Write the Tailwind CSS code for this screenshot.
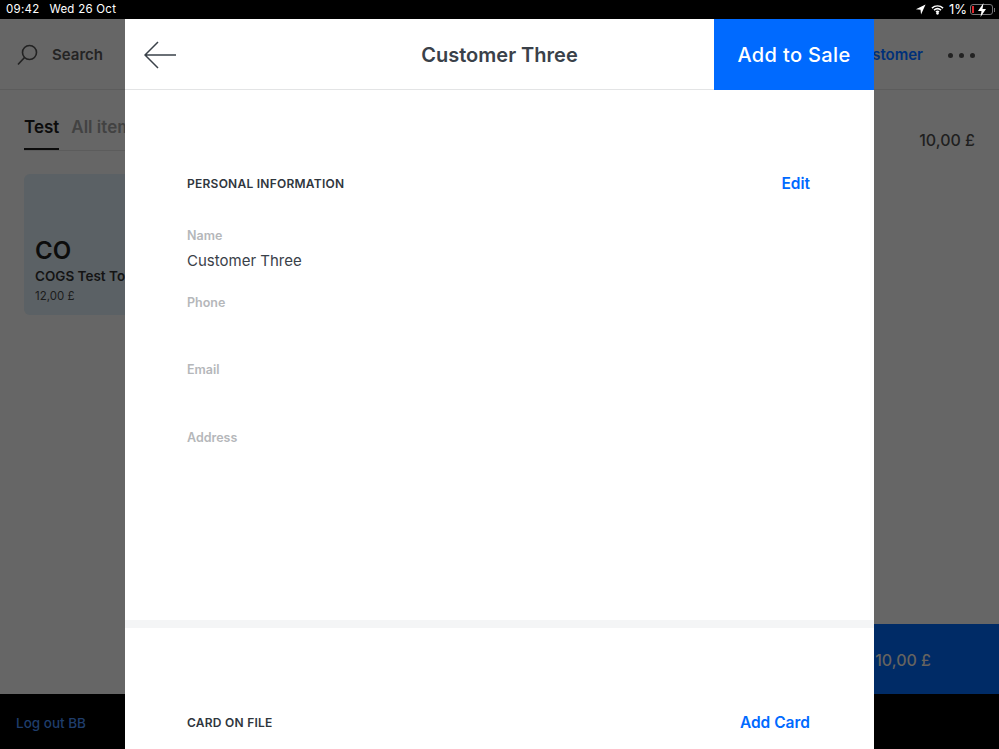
<!DOCTYPE html>
<html lang="en">
<head>
  <meta charset="UTF-8" />
  <title>Customer Three</title>
  <script src="https://cdn.jsdelivr.net/npm/@tailwindcss/browser@4"></script>
</head>
<body class="bg-[#666666] font-['Inter',sans-serif] overflow-hidden">
  <div class="relative w-[999px] h-[749px] flex flex-col overflow-hidden">
    <!-- Status bar -->
    <div class="h-[19px] bg-black text-white flex items-center justify-between pl-[6px] pr-[4px] shrink-0">
      <div class="flex gap-[10px] text-[11.5px] tracking-[0.25px]"><span>09:42</span><span>Wed 26 Oct</span></div>
      <div class="flex items-center text-[13px]">
        <svg class="w-[11px] h-[11px] mr-[5px]" viewBox="0 0 12 12"><path d="M11.5 .5 L1 5.6 L6 6.2 L6.6 11.5 Z" fill="#fff"/></svg>
        <svg class="w-[13px] h-[11px] mr-[5px]" viewBox="0 0 14 11" fill="none" stroke="#fff" stroke-width="1.6"><path d="M1 4 C4.5 .8 9.5 .8 13 4"/><path d="M3.2 6.2 C5.4 4.3 8.6 4.3 10.8 6.2"/><path d="M5.3 8.2 C6.3 7.4 7.7 7.4 8.7 8.2"/><circle cx="7" cy="9.6" r=".7" fill="#fff"/></svg>
        <span class="mr-[3px]">1%</span>
        <div class="relative w-[23px] h-[11px] border border-[#77777a] rounded-[3px]">
          <div class="absolute left-[1px] top-[1px] w-[2px] h-[7px] bg-[#e0262b]"></div>
          <svg class="absolute left-[6px] -top-[2px] w-[10px] h-[14px]" viewBox="0 0 10 14"><path d="M6.5 0 L1 8 H4.5 L3.5 14 L9 6 H5.5 Z" fill="#fff"/></svg>
        </div>
        <div class="w-[1px] h-[4px] bg-[#77777a] ml-[1px]"></div>
      </div>
    </div>

    <!-- Page behind the modal -->
    <div class="h-[71px] border-b border-[#5c5c5c] flex items-center justify-between pt-[2px] pl-[17px] pr-[24px] shrink-0">
      <div class="flex items-center gap-[14px]">
        <svg class="w-[21px] h-[22px]" viewBox="0 0 21 22" fill="none" stroke="#222" stroke-width="1.6"><circle cx="12.5" cy="8.5" r="7"/><path d="M7.5 13.5 L1 20.5"/></svg>
        <span class="text-[15px] font-semibold text-[#242424]">Search</span>
      </div>
      <div class="flex items-center gap-[25px]">
        <span class="text-[15px] font-semibold text-[#003079]">Customer</span>
        <div class="flex gap-[6px]">
          <div class="w-[5px] h-[5px] rounded-full bg-[#222]"></div>
          <div class="w-[5px] h-[5px] rounded-full bg-[#222]"></div>
          <div class="w-[5px] h-[5px] rounded-full bg-[#222]"></div>
        </div>
      </div>
    </div>

    <div class="flex-1 flex justify-between pl-[24px] pr-[24px]">
      <div class="w-[300px]">
        <div class="flex gap-[12px] text-[17px] leading-[24px] font-semibold mt-[25px] border-b border-[#5c5c5c] h-[36px]">
          <span class="text-[#0c0c0c] border-b-2 border-[#0c0c0c] h-[35px]">Test</span>
          <span class="text-[#424242]">All items</span>
        </div>
        <div class="mt-[23px] w-[200px] h-[141px] bg-[#5b6165] rounded-[6px] pl-[11px] pt-[63px]">
          <div class="text-[24px] leading-[28px] font-semibold text-[#0c0c0c]">CO</div>
          <div class="text-[13.5px] leading-[18px] mt-[2px] font-semibold text-[#141414] whitespace-nowrap">COGS Test Tool</div>
          <div class="text-[11.5px] leading-[16px] mt-[3px] text-[#1c1c1c]">12,00 £</div>
        </div>
      </div>
      <div class="text-[16px] font-medium text-[#1f1f1f] mt-[38px]">10,00 £</div>
    </div>

    <div class="h-[70px] flex justify-end shrink-0">
      <div class="w-[300px] bg-[#002b66] flex items-center justify-end pt-[2px] pr-[68px] text-[16px] font-medium text-[#66635f]">10,00 £</div>
    </div>
    <div class="h-[55px] bg-black flex items-center pt-[3px] pl-[16px] shrink-0 text-[13.5px] font-medium text-[#1f3d6b]">Log out BB</div>

    <!-- Modal -->
    <div class="absolute left-[125px] top-[19px] w-[749px] h-[730px] bg-white flex flex-col">
      <div class="h-[71px] border-b border-[#e3e4e5] flex items-center justify-between relative shrink-0">
        <svg class="w-[32px] h-[28px] ml-[19px] mt-[2px]" viewBox="0 0 32 28" fill="none" stroke="#3a4149" stroke-width="1.5"><path d="M32 14 H1 M14 1 L1 14 L14 27"/></svg>
        <div class="absolute left-0 right-0 pt-[2px] text-center text-[20px] font-semibold text-[#3a4149]">Customer Three</div>
        <div class="relative w-[160px] h-[71px] pt-[2px] bg-[#006aff] text-white text-[20px] font-medium tracking-[0.35px] flex items-center justify-center">Add to Sale</div>
      </div>

      <div class="pl-[62px] pr-[64px] pt-[84px] h-[530px] shrink-0">
        <div class="flex items-center justify-between h-[20px]">
          <span class="text-[12px] font-semibold tracking-[0.25px] text-[#2f363d]">PERSONAL INFORMATION</span>
          <span class="text-[15.5px] font-semibold text-[#006aff]">Edit</span>
        </div>
        <div class="mt-[32px] text-[12.5px] leading-[20px] font-semibold text-[#b5b7ba]">Name</div>
        <div class="mt-[4px] text-[15px] leading-[22px] text-[#3a4149]">Customer Three</div>
        <div class="mt-[21px] text-[12.5px] leading-[20px] font-semibold text-[#b5b7ba]">Phone</div>
        <div class="mt-[47px] text-[12.5px] leading-[20px] font-semibold text-[#b5b7ba]">Email</div>
        <div class="mt-[48px] text-[12.5px] leading-[20px] font-semibold text-[#b5b7ba]">Address</div>
      </div>

      <div class="h-[8px] bg-[#f4f5f6] shrink-0"></div>

      <div class="pl-[62px] pr-[64px] pt-[83px] flex items-center justify-between">
        <span class="text-[12px] font-semibold tracking-[0.25px] text-[#2f363d]">CARD ON FILE</span>
        <span class="text-[15.5px] font-semibold text-[#006aff]">Add Card</span>
      </div>
    </div>
  </div>
</body>
</html>
